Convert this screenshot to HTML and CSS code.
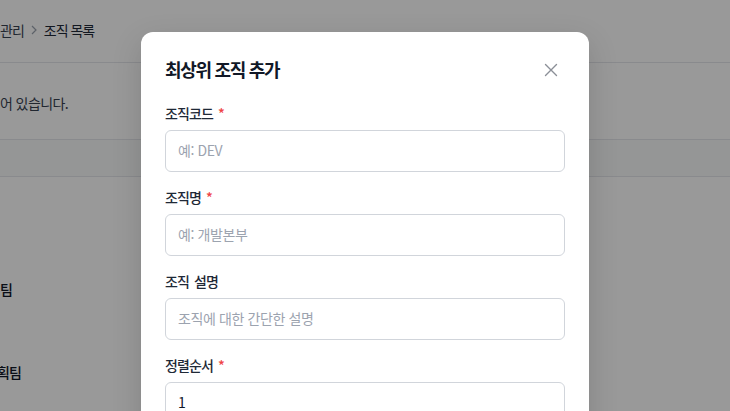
FILE: index.html
```html
<!DOCTYPE html>
<html lang="ko">
<head>
<meta charset="utf-8">
<link rel="stylesheet" href="styles.css">
</head>
<body>
<div class="page">
  <header class="topbar">
    <nav class="crumbs">
      <span class="crumb">관리</span>
      <svg class="chev" width="8" height="10" viewBox="0 0 8 10"><path d="M2 1l4 4-4 4" fill="none" stroke="#9ca3af" stroke-width="1.2"/></svg>
      <span class="crumb current">조직 목록</span>
    </nav>
  </header>
  <section class="intro">
    <p>어 있습니다.</p>
  </section>
  <div class="thead"></div>
  <div class="rows">
    <div class="row">팀</div>
    <div class="row">획팀</div>
    <div class="row">발팀</div>
  </div>
</div>

<div class="overlay"></div>

<div class="modal">
  <div class="modal-head">
    <h2>최상위 조직 추가</h2>
    <button class="close" aria-label="닫기">
      <svg width="14" height="14" viewBox="0 0 14 14"><path d="M1.5 1.5l11 11M12.5 1.5l-11 11" stroke="#8b8f97" stroke-width="1.4" stroke-linecap="round"/></svg>
    </button>
  </div>
  <form class="form">
    <div class="field">
      <label>조직코드 <span class="req">*</span></label>
      <input type="text" placeholder="예: DEV">
    </div>
    <div class="field">
      <label>조직명 <span class="req">*</span></label>
      <input type="text" placeholder="예: 개발본부">
    </div>
    <div class="field">
      <label>조직 설명</label>
      <input type="text" placeholder="조직에 대한 간단한 설명">
    </div>
    <div class="field">
      <label>정렬순서 <span class="req">*</span></label>
      <input type="text" value="1">
    </div>
  </form>
</div>
</body>
</html>
```
FILE: styles.css
```css
* { box-sizing: border-box; }
html, body { margin: 0; padding: 0; }
body {
  width: 730px;
  height: 411px;
  overflow: hidden;
  background: #fff;
  font-family: "Noto Sans CJK KR", "Noto Sans", "Liberation Sans", sans-serif;
  color: #111827;
  position: relative;
}
.page { width: 730px; }
.topbar {
  height: 63px;
  border-bottom: 1px solid #e5e7eb;
  display: flex;
  align-items: center;
  padding-bottom: 1px;
}
.crumbs {
  display: flex;
  align-items: center;
  gap: 6px;
  font-size: 14px;
  letter-spacing: -1px;
  color: #374151;
  padding-bottom: 1px;
}
.crumb.current { color: #1f2937; }
.intro {
  height: 77px;
  border-bottom: 1px solid #e5e7eb;
  display: flex;
  align-items: center;
  padding-top: 3px;
}
.intro p {
  margin: 0;
  font-size: 14px;
  letter-spacing: -0.6px;
  color: #374151;
}
.thead {
  height: 37px;
  background: #f9fafb;
  border-bottom: 1px solid #e5e7eb;
}
.rows { padding-top: 102px; display: flex; flex-direction: column; gap: 63px; }
.row {
  height: 20px;
  line-height: 20px;
  font-size: 14px;
  font-weight: 500;
  letter-spacing: -0.9px;
  color: #111827;
}
.row:nth-child(2) { margin-left: -3px; }
.overlay {
  position: absolute;
  inset: 0;
  background: rgba(0, 0, 0, 0.4);
}
.modal {
  position: absolute;
  top: 32px;
  left: 141px;
  width: 448px;
  height: 420px;
  background: #fff;
  border-radius: 12px;
  padding: 24px 24px;
  box-shadow: 0 10px 30px rgba(0,0,0,0.15);
}
.modal-head {
  display: flex;
  align-items: center;
  justify-content: space-between;
  height: 28px;
  margin-bottom: 19px;
}
.modal-head h2 {
  margin: 0;
  font-size: 18px;
  font-weight: 700;
  letter-spacing: -1.3px;
  line-height: 28px;
  color: #111827;
  position: relative;
  top: -1px;
}
.close {
  border: 0;
  background: none;
  padding: 0;
  width: 20px;
  height: 20px;
  display: flex;
  align-items: center;
  justify-content: center;
  margin-right: 4px;
  cursor: pointer;
}
.form { display: flex; flex-direction: column; gap: 15px; }
.field { display: flex; flex-direction: column; gap: 7px; }
.field label {
  font-size: 14px;
  line-height: 20px;
  font-weight: 500;
  letter-spacing: -0.9px;
  color: #1f2937;
  word-spacing: 2px;
}
.req { color: #ef4444; }
.field input {
  width: 400px;
  height: 42px;
  border: 1px solid #d1d5db;
  border-radius: 6px;
  padding: 0 12px 2px;
  font-family: "Noto Sans CJK KR", "Noto Sans", "Liberation Sans", sans-serif;
  font-size: 14px;
  letter-spacing: -0.4px;
  color: #111827;
  outline: none;
}
.field input::placeholder { color: #9ca3af; }
```
